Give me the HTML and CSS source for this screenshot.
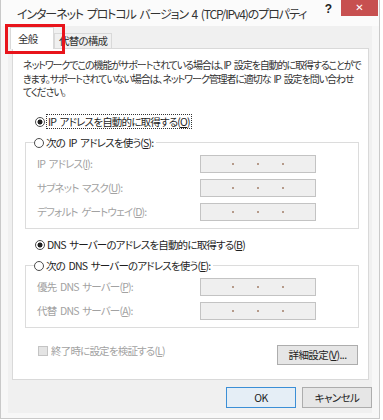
FILE: index.html
```html
<!DOCTYPE html>
<html>
	<head>
		<meta charset="UTF-8">
		<title>インターネット プロトコル バージョン 4 (TCP/IPv4)のプロパティ</title>
		<link rel="stylesheet" href="styles.css">
	</head>
	<body>
		<div class="window">
			<div class="titlebar">
				<span class="title">インターネット プロトコル バージョン 4 (TCP/IPv4)のプロパティ</span>
				<span class="help">?</span>
				<span class="close">✕</span>
			</div>

			<div class="client">
				<div class="tabs">
					<div class="tab active">全般</div>
					<div class="tab">代替の構成</div>
				</div>

				<div class="panel">
					<p class="desc">ネットワークでこの機能がサポートされている場合は、IP 設定を自動的に取得することがで<br>きます。サポートされていない場合は、ネットワーク管理者に適切な IP 設定を問い合わせ<br>てください。</p>

					<div class="option first">
						<span class="radio checked"></span>
						<span class="focus">IP アドレスを自動的に取得する(<u>O</u>)</span>
					</div>

					<fieldset class="group">
						<legend><span class="radio"></span>次の IP アドレスを使う(<u>S</u>):</legend>
						<div class="row"><span class="label">IP アドレス(<u>I</u>):</span><span class="ip"><i></i><i></i><i></i></span></div>
						<div class="row"><span class="label">サブネット マスク(<u>U</u>):</span><span class="ip"><i></i><i></i><i></i></span></div>
						<div class="row"><span class="label">デフォルト ゲートウェイ(<u>D</u>):</span><span class="ip"><i></i><i></i><i></i></span></div>
					</fieldset>

					<div class="option dns">
						<span class="radio checked"></span>
						<span>DNS サーバーのアドレスを自動的に取得する(<u>B</u>)</span>
					</div>

					<fieldset class="group second">
						<legend><span class="radio"></span>次の DNS サーバーのアドレスを使う(<u>E</u>):</legend>
						<div class="row"><span class="label">優先 DNS サーバー(<u>P</u>):</span><span class="ip"><i></i><i></i><i></i></span></div>
						<div class="row"><span class="label">代替 DNS サーバー(<u>A</u>):</span><span class="ip"><i></i><i></i><i></i></span></div>
					</fieldset>

					<div class="bottom-row">
						<span class="check"></span>
						<span class="check-label">終了時に設定を検証する(<u>L</u>)</span>
						<button class="btn advanced">詳細設定(<u>V</u>)...</button>
					</div>
				</div>

				<div class="buttons">
					<button class="btn default">OK</button>
					<button class="btn">キャンセル</button>
				</div>
			</div>

			<div class="marker"></div>
		</div>
	</body>
</html>
```

FILE: styles.css
```css
* {
	box-sizing: border-box;
}

body {
	margin: 0;
	background: #ffffff;
	font-family: "Noto Sans CJK JP", "Noto Sans", sans-serif;
	font-feature-settings: "palt";
	font-size: 10.5px;
	letter-spacing: -0.8px;
	word-spacing: 2px;
	color: #1e1e1e;
}

.window {
	position: relative;
	width: 380px;
	height: 419px;
	background: #f7f7f7;
	border: 1px solid #c9c9c9;
	border-top: none;
}

/* title bar */
.titlebar {
	display: flex;
	align-items: flex-start;
	height: 26px;
	background: #fbfbfb;
}

.title {
	flex: 1;
	margin: 6px 0 0 16px;
	font-size: 12px;
	letter-spacing: -1.1px;
	line-height: 16px;
	color: #333333;
	white-space: nowrap;
	overflow: hidden;
}

.help {
	margin: 2px 9px 0 0;
	font-family: "Liberation Sans", sans-serif;
	font-weight: bold;
	font-size: 12px;
	letter-spacing: 0;
	color: #222222;
}

.close {
	width: 37px;
	height: 16px;
	margin-right: 1px;
	background: #c75050;
	color: #ffffff;
	font-size: 10px;
	font-weight: bold;
	letter-spacing: 0;
	line-height: 16px;
	text-align: center;
	font-family: "DejaVu Sans", sans-serif;
}

/* client area */
.client {
	margin-left: 7px;
	width: 364px;
	height: 387px;
	background: #f0f0f0;
}

.tabs {
	display: flex;
	align-items: flex-end;
	height: 22px;
	padding-left: 2px;
}

.tab {
	height: 15px;
	padding: 0 4px;
	border: 1px solid #d9d9d9;
	border-bottom: none;
	background: #f0f0f0;
	line-height: 14px;
	color: #333333;
}

.tab.active {
	position: relative;
	z-index: 1;
	width: 44px;
	height: 22px;
	margin-bottom: -1px;
	padding: 4px 0 0 7px;
	background: #ffffff;
}

.panel {
	margin-left: 4px;
	width: 357px;
	height: 332px;
	padding: 9px 10px 0 10px;
	background: #ffffff;
	border: 1px solid #d9d9d9;
}

.desc {
	margin: 0;
	font-size: 10px;
	letter-spacing: -1.1px;
	line-height: 13.5px;
	color: #333333;
	white-space: nowrap;
}

/* radio options */
.option {
	display: flex;
	align-items: center;
	height: 14px;
	margin-left: 12px;
}

.option.first {
	margin-top: 16px;
}

.option.dns {
	margin-top: 9px;
}

.radio {
	display: inline-block;
	width: 10px;
	height: 10px;
	margin-right: 2px;
	border: 1px solid #4c4c4c;
	border-radius: 50%;
	background: #ffffff;
	flex-shrink: 0;
}

.radio.checked {
	background: radial-gradient(circle, #222222 0, #222222 2.2px, #ffffff 2.8px);
}

.focus {
	outline: 1px dotted #333333;
	outline-offset: 0;
	padding: 0 1px;
	line-height: 13px;
}

/* group boxes */
.group {
	margin: 7px 0 0 2px;
	width: 334px;
	padding: 0 0 7px 8px;
	border: 1px solid #dcdcdc;
}

.group legend {
	display: flex;
	align-items: center;
	height: 14px;
	padding: 0 3px 0 0;
	line-height: 14px;
}

.row {
	display: flex;
	align-items: center;
	height: 18px;
	margin-top: 6px;
	padding-left: 3px;
	color: #a2a2a2;
}

.group legend + .row {
	margin-top: 5px;
}

.label {
	width: 163px;
}

.ip {
	display: flex;
	justify-content: space-around;
	align-items: center;
	width: 116px;
	height: 18px;
	padding: 0 20px;
	background: #efefef;
	border: 1px solid #c3c3c3;
}

.ip i {
	width: 2px;
	height: 2px;
	background: #b59a8a;
}

/* bottom */
.bottom-row {
	display: flex;
	align-items: flex-start;
	margin-top: 17px;
	padding-left: 15px;
}

.check {
	width: 10px;
	height: 10px;
	margin-top: 1px;
	margin-right: 3px;
	background: #e4e4e4;
	border: 1px solid #c4c4c4;
}

.check-label {
	flex: 1;
	color: #a2a2a2;
	line-height: 12px;
}

.btn {
	height: 20px;
	padding: 0;
	font-family: "Noto Sans CJK JP", "Noto Sans", sans-serif;
	font-feature-settings: "palt";
	font-size: 10.5px;
	letter-spacing: -0.6px;
	color: #222222;
	background: #e6e6e6;
	border: 1px solid #adadad;
}

.btn.advanced {
	width: 81px;
}

.buttons {
	display: flex;
	justify-content: flex-end;
	gap: 6px;
	margin-top: 7px;
}

.buttons .btn {
	width: 70px;
	height: 21px;
}

.btn.default {
	border-color: #3c8fd6;
	background: #e5eef6;
}

/* red annotation box over the first tab */
.marker {
	position: absolute;
	left: 4px;
	top: 24px;
	width: 60px;
	height: 30px;
	border: 3px solid #e8141b;
}
```
